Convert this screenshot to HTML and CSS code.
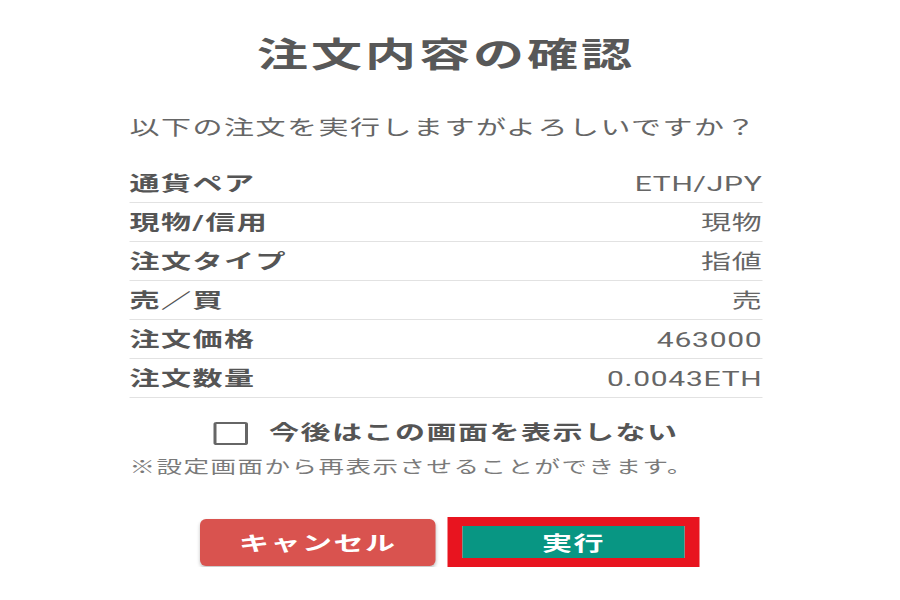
FILE: index.html
```html
<!DOCTYPE html>
<html>
<head>
    <meta charset="utf-8">
    <title>注文内容の確認</title>
    <link rel="stylesheet" href="styles.css">
</head>
<body>
    <div class="dialog">
        <h1 class="dialog-title">注文内容の確認</h1>
        <p class="dialog-lead">以下の注文を実行しますがよろしいですか？</p>

        <div class="order-table">
            <div class="order-row">
                <span class="order-label">通貨ペア</span>
                <span class="order-value">ETH/JPY</span>
            </div>
            <div class="order-row">
                <span class="order-label">現物/信用</span>
                <span class="order-value">現物</span>
            </div>
            <div class="order-row">
                <span class="order-label">注文タイプ</span>
                <span class="order-value">指値</span>
            </div>
            <div class="order-row">
                <span class="order-label">売／買</span>
                <span class="order-value">売</span>
            </div>
            <div class="order-row">
                <span class="order-label">注文価格</span>
                <span class="order-value">463000</span>
            </div>
            <div class="order-row">
                <span class="order-label">注文数量</span>
                <span class="order-value">0.0043ETH</span>
            </div>
        </div>

        <label class="skip-check">
            <span class="check-box"></span>
            <span>今後はこの画面を表示しない</span>
        </label>
        <p class="skip-note">※設定画面から再表示させることができます。</p>

        <div class="actions">
            <button class="btn btn-cancel">キャンセル</button>
            <div class="highlight">
                <button class="btn btn-run">実行</button>
            </div>
        </div>
    </div>
</body>
</html>
```

FILE: styles.css
```css
body {
    margin: 0;
    padding: 0 9px 0 0;
    background: #fff;
    font-family: Roboto, "Noto Sans CJK JP", sans-serif;
    color: #555;
}
/* the dialog is drawn wide: everything inside is stretched sideways */
.dialog {
    width: 422px;
    margin: 0 auto;
    padding-top: 35px;
    transform: scaleX(1.5);
    transform-origin: 50% 0;
}
.dialog-title {
    margin: 0;
    font-size: 34px;
    line-height: 40px;
    font-weight: bold;
    text-align: center;
    letter-spacing: 2px;
    color: #585858;
}
.dialog-lead {
    margin: 41px 0 0;
    font-size: 20px;
    line-height: 24px;
    letter-spacing: 1px;
    color: #666;
}
.order-table {
    margin-top: 24px;
}
.order-row {
    display: flex;
    justify-content: space-between;
    padding: 9px 0 7px;
    line-height: 22px;
    font-size: 20px;
    border-bottom: 1px solid #e2e2e2;
}
.order-label {
    font-weight: bold;
    letter-spacing: 1px;
    color: #555;
}
.order-value {
    color: #666;
    letter-spacing: 0.5px;
}
.skip-check {
    display: flex;
    align-items: center;
    justify-content: center;
    gap: 14px;
    margin-top: 23px;
    font-size: 20px;
    line-height: 24px;
    font-weight: bold;
    letter-spacing: 1px;
    color: #555;
}
.check-box {
    width: 19px;
    height: 19px;
    border: 2px solid #666;
    border-radius: 2px;
}
.skip-note {
    margin: 11px 0 0;
    font-size: 17px;
    line-height: 22px;
    letter-spacing: 1px;
    color: #7a7a7a;
}
.actions {
    display: flex;
    align-items: center;
    justify-content: center;
    gap: 8px;
    margin-top: 39px;
    padding-left: 5px;
}
.btn {
    border: none;
    font-family: inherit;
    font-size: 20px;
    font-weight: bold;
    letter-spacing: 1px;
    color: #fff;
}
.btn-cancel {
    width: 157px;
    height: 47px;
    background: #d9534f;
    border-radius: 4px / 6px;
    box-shadow: 0 2px 3px rgba(0, 0, 0, 0.25);
}
.highlight {
    border: solid #e8141f;
    border-width: 9px 10px;
}
.btn-run {
    display: block;
    width: 148px;
    height: 32px;
    background: #089683;
}
```
